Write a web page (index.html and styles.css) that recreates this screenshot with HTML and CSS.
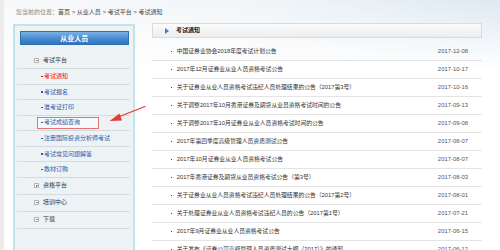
FILE: index.html
```html
<!DOCTYPE html>
<html lang="zh-CN">
<head>
    <meta charset="UTF-8">
    <title>考试通知</title>
    <link rel="stylesheet" href="styles.css">
</head>
<body>
    <div class="page">
        <div class="crumbs">
            <span class="crumbs-label">您当前的位置：</span>首页 &gt; 从业人员 &gt; 考试平台 &gt; 考试通知
        </div>

        <div class="main">
            <aside class="sidebar">
                <div class="sidebar-title">从业人员</div>
                <ul class="menu">
                    <li class="menu-group"><span class="toggle"></span>考试平台</li>
                    <li class="menu-item"><a class="active">考试通知</a></li>
                    <li class="menu-item"><a>考试报名</a></li>
                    <li class="menu-item"><a>准考证打印</a></li>
                    <li class="menu-item"><a class="marked">考试成绩查询</a></li>
                    <li class="menu-item"><a>注册国际投资分析师考试</a></li>
                    <li class="menu-item"><a>考试常见问题解答</a></li>
                    <li class="menu-item"><a>教材订购</a></li>
                    <li class="menu-group"><span class="toggle plus"></span>资格平台</li>
                    <li class="menu-group"><span class="toggle"></span>培训中心</li>
                    <li class="menu-group"><span class="toggle"></span>下载</li>
                </ul>
            </aside>

            <section class="content">
                <div class="content-title"><span class="title-icon"></span>考试通知</div>
                <ul class="news">
                    <li><span class="news-title">中国证券业协会2018年度考试计划公告</span><span class="news-date">2017-12-08</span></li>
                    <li><span class="news-title">2017年12月证券业从业人员资格考试公告</span><span class="news-date">2017-10-17</span></li>
                    <li><span class="news-title">关于证券业从业人员资格考试违纪人员处理结果的公告（2017第3号）</span><span class="news-date">2017-10-16</span></li>
                    <li><span class="news-title">关于调整2017年10月香港证券及期货从业员资格考试时间的公告</span><span class="news-date">2017-09-13</span></li>
                    <li><span class="news-title">关于调整2017年10月证券业从业人员资格考试时间的公告</span><span class="news-date">2017-09-08</span></li>
                    <li><span class="news-title">2017年第四季度高级管理人员资质测试公告</span><span class="news-date">2017-08-07</span></li>
                    <li><span class="news-title">2017年10月证券业从业人员资格考试公告</span><span class="news-date">2017-08-07</span></li>
                    <li><span class="news-title">2017年香港证券及期货从业员资格考试公告（第3号）</span><span class="news-date">2017-08-03</span></li>
                    <li><span class="news-title">关于证券业从业人员资格考试违纪人员处理结果的公告（2017第2号）</span><span class="news-date">2017-08-01</span></li>
                    <li><span class="news-title">关于处理证券业从业人员资格考试违纪人员的公告（2017第1号）</span><span class="news-date">2017-07-21</span></li>
                    <li><span class="news-title">2017年9月证券业从业人员资格考试公告</span><span class="news-date">2017-06-15</span></li>
                    <li><span class="news-title">关于发布《证券公司高级管理人员资质测试大纲（2017）》的通知</span><span class="news-date">2017-06-12</span></li>
                </ul>
            </section>
        </div>
    </div>

    <!-- red hint arrow drawn over the menu -->
    <svg class="pointer" width="160" height="130" viewBox="0 0 160 130">
        <line x1="145" y1="106.5" x2="117" y2="117.5" stroke="#e63b33" stroke-width="1.3" stroke-linecap="round"/>
        <polygon points="109.5,121 119.5,113.5 122,120.5" fill="#e63b33"/>
    </svg>
</body>
</html>
```

FILE: styles.css
```css
body {
    margin: 0;
    position: relative;
    background-color: #ececec;
    font-family: "Liberation Sans", "Noto Sans CJK SC", sans-serif;
    color: #333;
    overflow: hidden;
}

ul {
    list-style: none;
    margin: 0;
    padding: 0;
}

.page {
    margin-left: 4px;
    height: 250px;
    background:
        linear-gradient(to bottom, rgba(255, 255, 255, 0) 0, #fff 70px),
        linear-gradient(to right, #f7f9fa 0, #f1f5f8 50%, #dde9f2 100%);
}

/* breadcrumb */
.crumbs {
    height: 23px;
    line-height: 25px;
    padding-left: 12px;
    font-size: 6px;
    color: #444;
}

.crumbs-label {
    color: #888;
}

.main {
    display: flex;
    gap: 17px;
    padding-left: 9px;
}

/* left menu */
.sidebar {
    width: 118px;
    height: 240px;
    margin-top: 1px;
    padding: 5px 3px 0 2px;
    box-sizing: border-box;
    width: 122px;
    border: 2px solid #c2e2ee;
    background-color: #edf2f5;
}

.sidebar-title {
    height: 14px;
    margin: 0 1px 0 2.5px;
    line-height: 14px;
    text-align: center;
    font-size: 7px;
    font-weight: bold;
    color: #fff;
    background: linear-gradient(to bottom, #7ab3e6 0, #4a8fd3 50%, #2f76c0 100%);
    border: 1px solid #2e6fae;
    box-sizing: border-box;
}

.menu {
    margin-top: 7px;
}

.menu-group {
    height: 16px;
    line-height: 17px;
    padding-left: 17px;
    font-size: 6px;
    color: #333;
    border-bottom: 1px solid #d3dbe0;
    display: flex;
    align-items: center;
}

.toggle {
    position: relative;
    width: 5px;
    height: 5px;
    margin-right: 4px;
    border: 1px solid #b4b4b4;
    background-color: #fafafa;
    box-sizing: border-box;
}

.toggle::before {
    content: "";
    position: absolute;
    left: 0.5px;
    top: 1px;
    width: 2px;
    height: 1px;
    background-color: #888;
}

.toggle.plus::after {
    content: "";
    position: absolute;
    left: 1px;
    top: 0.5px;
    width: 1px;
    height: 2px;
    background-color: #888;
}

.menu-item {
    height: 14.5px;
    line-height: 14.5px;
    padding-left: 24px;
    font-size: 6px;
    border-bottom: 1px solid #d3dbe0;
}

.menu-item a {
    color: #1f5fae;
}

.menu-item a::before {
    content: "";
    display: inline-block;
    width: 1.5px;
    height: 1.5px;
    margin-right: 1.5px;
    vertical-align: middle;
    background-color: currentColor;
}

.menu-item a.active {
    color: #f00;
}

.menu-item a.marked {
    display: inline-block;
    height: 9.5px;
    line-height: 9.5px;
    margin-left: -4px;
    padding: 0 18px 0 3px;
    border: 1px solid #e27474;
    background-color: #f6f8f9;
    vertical-align: middle;
}

/* right list */
.content {
    width: 330px;
}

.content-title {
    height: 13px;
    line-height: 13px;
    padding-left: 12px;
    font-size: 6px;
    font-weight: bold;
    color: #222;
    border: 1px solid #dadada;
    background: linear-gradient(to bottom, #fbfbfb, #ededed);
    display: flex;
    align-items: center;
}

.title-icon {
    width: 0;
    height: 0;
    margin-right: 7px;
    border-left: 4px solid #3b7fd4;
    border-top: 3px solid transparent;
    border-bottom: 3px solid transparent;
}

.news {
    margin-top: 5px;
}

.news li {
    display: flex;
    justify-content: space-between;
    height: 17px;
    line-height: 17px;
    padding: 0 14px 0 19px;
    font-size: 5.8px;
    color: #333;
    border-bottom: 1px solid #e4e4e4;
    white-space: nowrap;
}

.news-title {
    overflow: hidden;
}

.news-title::before {
    content: "";
    display: inline-block;
    width: 1.2px;
    height: 1.2px;
    margin-right: 4.5px;
    vertical-align: middle;
    background-color: #444;
}

.news-date {
    margin-left: 8px;
    font-size: 5.9px;
    color: #555;
}

.pointer {
    position: absolute;
    left: 0;
    top: 0;
}
```
